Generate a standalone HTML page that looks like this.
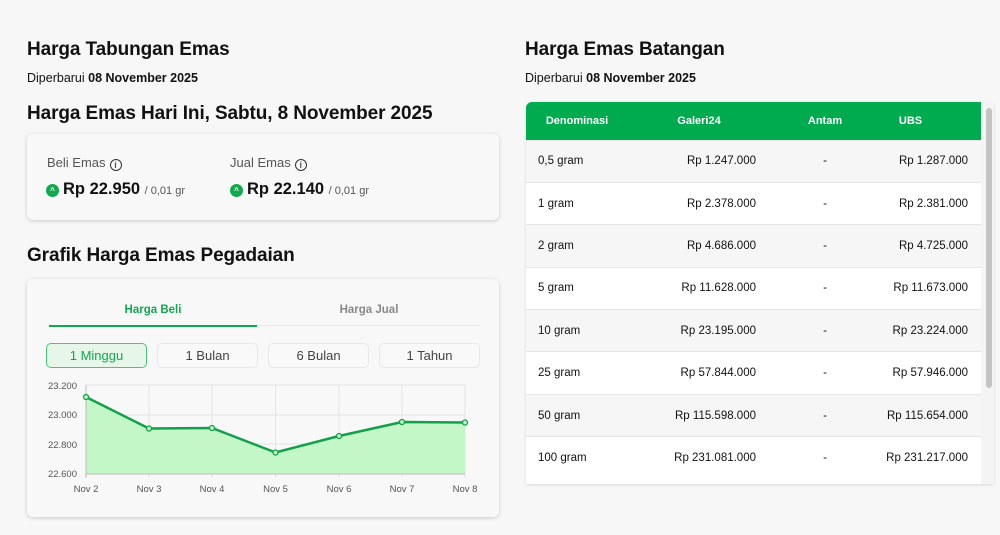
<!DOCTYPE html>
<html><head><meta charset="utf-8"><style>
*{box-sizing:border-box;margin:0;padding:0}
body{width:1000px;height:535px;background:#f7f7f7;font-family:"Liberation Sans",sans-serif;color:#111;position:relative;overflow:hidden}
.a{position:absolute}
h1{font-size:19px;font-weight:700;position:absolute;white-space:nowrap;letter-spacing:-0.1px}
.sub{font-size:12.5px;position:absolute}
.card{position:absolute;background:#f8f8f8;border-radius:6px;box-shadow:0 1px 4px rgba(0,0,0,.18)}
.lbl{font-size:13px;color:#555}
.info{display:inline-block;width:12px;height:12px;border:1.3px solid #333;border-radius:50%;font-size:9px;text-align:center;line-height:10px;font-weight:700;vertical-align:-1px;margin-left:4px}
.up{display:inline-block;width:13px;height:13px;border-radius:50%;background:#12a84e;color:#fff;font-size:8px;text-align:center;line-height:13px;vertical-align:1px;margin-right:4px}
.price{font-size:16.5px;font-weight:700}
.unit{font-size:11px;color:#555;font-weight:400}
.btn{position:absolute;top:343px;height:25px;border:1px solid #e8e8e8;border-radius:5px;font-size:13px;color:#444;text-align:center;line-height:23px;background:#f9f9f9}
table{border-collapse:collapse;width:455px;font-size:11.5px;table-layout:fixed}
th{background:#00aa4f;color:#fff;height:38px;font-weight:700;font-size:11px}
td{height:42.4px;border-top:1px solid #e6e6e6}
tr:nth-child(odd) td{background:#fff}
tr:nth-child(even) td{background:#f6f6f6}
td:nth-child(2){text-align:right;padding-right:14px}
td:nth-child(3){text-align:center}
td:nth-child(4){text-align:right;padding-right:13px}
td:nth-child(1){padding-left:12px}
</style></head><body>
<h1 style="left:27px;top:39px">Harga Tabungan Emas</h1>
<div class="sub" style="left:27px;top:71px">Diperbarui <b>08 November 2025</b></div>
<h1 style="left:27px;top:103px">Harga Emas Hari Ini, Sabtu, 8 November 2025</h1>
<div class="card" style="left:27px;top:134px;width:472px;height:86px"></div>
<div class="a lbl" style="left:47px;top:155px">Beli Emas<span class="info">i</span></div>
<div class="a lbl" style="left:230px;top:155px">Jual Emas<span class="info">i</span></div>
<div class="a price" style="left:46px;top:180px"><span class="up">^</span>Rp 22.950 <span class="unit">/ 0,01 gr</span></div>
<div class="a price" style="left:230px;top:180px"><span class="up">^</span>Rp 22.140 <span class="unit">/ 0,01 gr</span></div>
<h1 style="left:27px;top:245px">Grafik Harga Emas Pegadaian</h1>
<div class="card" style="left:27px;top:279px;width:472px;height:238px"></div>
<div class="a" style="left:49px;top:304px;width:208px;text-align:center;font-size:11.5px;font-weight:700;color:#12a84e">Harga Beli</div>
<div class="a" style="left:257px;top:304px;width:224px;text-align:center;font-size:11.5px;font-weight:700;color:#888">Harga Jual</div>
<div class="a" style="left:49px;top:325px;width:431px;height:1px;background:#e6e6e6"></div>
<div class="a" style="left:49px;top:325px;width:208px;height:2px;background:#12a84e"></div>
<div class="btn" style="left:46px;width:101px;background:#e6f7ea;border-color:#4cc476;color:#12a84e">1 Minggu</div>
<div class="btn" style="left:157px;width:101px">1 Bulan</div>
<div class="btn" style="left:268px;width:101px">6 Bulan</div>
<div class="btn" style="left:379px;width:101px">1 Tahun</div>
<svg class="a" style="left:0;top:0" width="1000" height="535">
<g stroke="#e4e4e4" stroke-width="1">
<line x1="86" y1="385" x2="465" y2="385"/><line x1="86" y1="415" x2="465" y2="415"/><line x1="86" y1="444" x2="465" y2="444"/>
<line x1="149" y1="385" x2="149" y2="478"/><line x1="212" y1="385" x2="212" y2="478"/><line x1="275.5" y1="385" x2="275.5" y2="478"/><line x1="339" y1="385" x2="339" y2="478"/><line x1="402" y1="385" x2="402" y2="478"/><line x1="465" y1="385" x2="465" y2="478"/>
</g>
<path d="M86 397 L149 428.5 L212 428 L275.5 452.5 L339 436 L402 422 L465 422.5 L465 474 L86 474Z" fill="#c3f7c7"/>
<line x1="86" y1="474" x2="465" y2="474" stroke="#bbb"/>
<line x1="86" y1="385" x2="86" y2="478" stroke="#bbb"/>
<path d="M86 397 L149 428.5 L212 428 L275.5 452.5 L339 436 L402 422 L465 422.5" fill="none" stroke="#12a04a" stroke-width="2.5"/>
<g fill="#c3f7c7" stroke="#12a04a" stroke-width="1.3">
<circle cx="86" cy="397" r="2.5"/><circle cx="149" cy="428.5" r="2.5"/><circle cx="212" cy="428" r="2.5"/><circle cx="275.5" cy="452.5" r="2.5"/><circle cx="339" cy="436" r="2.5"/><circle cx="402" cy="422" r="2.5"/><circle cx="465" cy="422.5" r="2.5"/></g>
<g font-family="Liberation Sans" font-size="9.5" fill="#555" text-anchor="end">
<text x="77" y="389">23.200</text><text x="77" y="418">23.000</text><text x="77" y="448">22.800</text><text x="77" y="477">22.600</text></g>
<g font-family="Liberation Sans" font-size="9.5" fill="#555" text-anchor="middle">
<text x="86" y="492">Nov 2</text><text x="149" y="492">Nov 3</text><text x="212" y="492">Nov 4</text><text x="275.5" y="492">Nov 5</text><text x="339" y="492">Nov 6</text><text x="402" y="492">Nov 7</text><text x="465" y="492">Nov 8</text></g>
</svg>
<h1 style="left:525px;top:39px">Harga Emas Batangan</h1>
<div class="sub" style="left:525px;top:71px">Diperbarui <b>08 November 2025</b></div>
<div class="a" style="left:526px;top:102px;width:468px;height:382px;overflow:hidden;border-radius:6px 6px 0 0;background:#fff;box-shadow:0 1px 3px rgba(0,0,0,.12)">
<table>
<colgroup><col style="width:102px"><col style="width:142px"><col style="width:110px"><col style="width:101px"></colgroup>
<tr><th>Denominasi</th><th>Galeri24</th><th>Antam</th><th style="padding-right:40px">UBS</th></tr>
<tr><td>0,5 gram</td><td>Rp 1.247.000</td><td>-</td><td>Rp 1.287.000</td></tr>
<tr><td>1 gram</td><td>Rp 2.378.000</td><td>-</td><td>Rp 2.381.000</td></tr>
<tr><td>2 gram</td><td>Rp 4.686.000</td><td>-</td><td>Rp 4.725.000</td></tr>
<tr><td>5 gram</td><td>Rp 11.628.000</td><td>-</td><td>Rp 11.673.000</td></tr>
<tr><td>10 gram</td><td>Rp 23.195.000</td><td>-</td><td>Rp 23.224.000</td></tr>
<tr><td>25 gram</td><td>Rp 57.844.000</td><td>-</td><td>Rp 57.946.000</td></tr>
<tr><td>50 gram</td><td>Rp 115.598.000</td><td>-</td><td>Rp 115.654.000</td></tr>
<tr><td>100 gram</td><td>Rp 231.081.000</td><td>-</td><td>Rp 231.217.000</td></tr>
</table>
<div class="a" style="left:455px;top:0;width:13px;height:382px;background:#f4f4f4"></div>
<div class="a" style="left:460px;top:6px;width:6px;height:280px;background:#c4c4c4;border-radius:3px"></div>
</div>
</body></html>
